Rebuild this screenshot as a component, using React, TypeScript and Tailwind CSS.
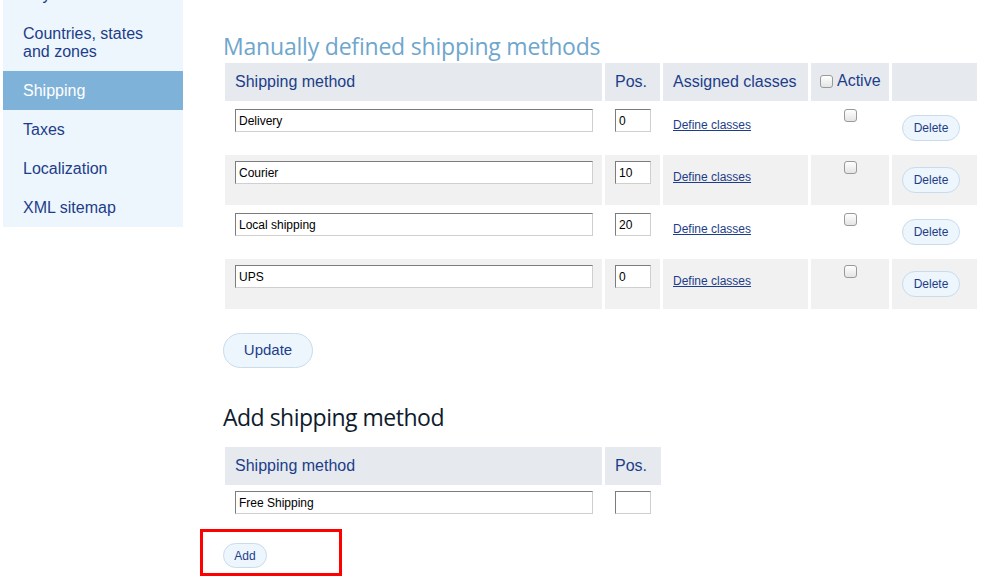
import React from 'react';

const sideItems = ['Payment methods', 'Countries, states and zones', 'Shipping', 'Taxes', 'Localization', 'XML sitemap'];

const methods = [
    { name: 'Delivery', pos: '0' },
    { name: 'Courier', pos: '10' },
    { name: 'Local shipping', pos: '20' },
    { name: 'UPS', pos: '0' },
];

const Check = ({ className = '' }: { className?: string }) => (
    <input
        type="checkbox"
        className={`appearance-none w-[13px] h-[13px] rounded-[3px] border border-[#9a9a9a] bg-gradient-to-b from-white to-[#e4e4e4] ${className}`}
    />
);

const TextBox = ({ value, w }: { value: string; w: string }) => (
    <input
        type="text"
        defaultValue={value}
        className={`${w} block h-[23px] border border-t-[#7c7c7c] border-l-[#7c7c7c] border-r-[#cfcfcf] border-b-[#cfcfcf] bg-white px-[3px] text-[12px] text-black outline-none`}
    />
);

const Pill = ({ label, className }: { label: string; className: string }) => (
    <button className={`rounded-full border border-[#c8dcec] bg-[#eef6fd] text-[#1d3d8a] ${className}`}>{label}</button>
);

const App: React.FC = () => {
    return (
        <div className="min-h-screen bg-white flex items-start font-['Liberation_Sans',Arial,sans-serif] relative overflow-hidden">
            {/* Sidebar */}
            <aside className="w-[180px] ml-[3px] -mt-[25px] bg-[#eef6fd] flex flex-col">
                {sideItems.map((item) => (
                    <div
                        key={item}
                        className={`px-5 py-[10.5px] text-[16px] leading-[18px] ${item === 'Shipping' ? 'bg-[#7fb2d9] text-white' : 'text-[#1d3d8a]'}`}
                    >
                        {item === 'Countries, states and zones' ? (
                            <>Countries, states<br />and zones</>
                        ) : item}
                    </div>
                ))}
            </aside>

            {/* Main */}
            <main className="ml-[40px] pt-[33px] flex flex-col items-start">
                <h2 className="text-[23px] leading-[26px] text-[#6ea6cd] font-['Open_Sans',sans-serif] tracking-[-0.2px]">
                    Manually defined shipping methods
                </h2>

                <table className="-ml-px mt-[2px] border-separate border-spacing-x-[3px] border-spacing-y-[2px] w-[758px]">
                    <thead>
                        <tr className="bg-[#e6eaee] text-[#1d3d8a] text-[16px] text-left">
                            <th className="w-[377px] h-[38px] pl-[10px] font-normal">Shipping method</th>
                            <th className="w-[55px] pl-[10px] font-normal">Pos.</th>
                            <th className="w-[145px] pl-[10px] font-normal">Assigned classes</th>
                            <th className="w-[78px] pl-[9px] font-normal">
                                <span className="inline-flex items-center gap-[4px]"><Check />Active</span>
                            </th>
                            <th className="font-normal"></th>
                        </tr>
                    </thead>
                    <tbody>
                        {methods.map((m, i) => (
                            <tr key={m.name} className={i % 2 ? 'bg-[#f1f1f1]' : 'bg-white'}>
                                <td className="h-[50px] pl-[10px] pt-[6px] align-top"><TextBox value={m.name} w="w-[358px]" /></td>
                                <td className="pl-[10px] pt-[6px] align-top"><TextBox value={m.pos} w="w-[36px]" /></td>
                                <td className="pl-[10px] align-middle">
                                    <a href="#" className="text-[12px] text-[#1d3d8a] underline -mt-[6px] block">Define classes</a>
                                </td>
                                <td className="align-top pt-[6px]"><Check className="block mx-auto" /></td>
                                <td className="pl-[10px] align-middle">
                                    <Pill label="Delete" className="w-[58px] h-[26px] text-[12px]" />
                                </td>
                            </tr>
                        ))}
                    </tbody>
                </table>

                <Pill label="Update" className="mt-[22px] w-[90px] h-[35px] text-[15px]" />

                <h2 className="mt-[35px] text-[23px] leading-[28px] text-[#0e1b2c] font-['Open_Sans',sans-serif] tracking-[-0.5px]">
                    Add shipping method
                </h2>

                <table className="-ml-px mt-[14px] border-separate border-spacing-x-[3px] border-spacing-y-[2px] w-[442px]">
                    <thead>
                        <tr className="bg-[#e6eaee] text-[#1d3d8a] text-[16px] text-left">
                            <th className="w-[377px] h-[38px] pl-[10px] font-normal">Shipping method</th>
                            <th className="pl-[10px] font-normal">Pos.</th>
                        </tr>
                    </thead>
                    <tbody>
                        <tr>
                            <td className="h-[30px] pl-[10px] pt-[4px] align-top"><TextBox value="Free Shipping" w="w-[358px]" /></td>
                            <td className="pl-[10px] pt-[4px] align-top"><TextBox value="" w="w-[36px]" /></td>
                        </tr>
                    </tbody>
                </table>

                <Pill label="Add" className="mt-[24px] w-[44px] h-[25px] text-[12px]" />
            </main>

            {/* Annotation box */}
            <div className="absolute left-[200px] top-[529px] w-[142px] h-[47px] border-[3px] border-[#ff0000] pointer-events-none" />
        </div>
    );
};

export default App;
